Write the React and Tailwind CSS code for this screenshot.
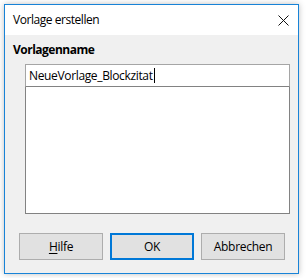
export default function App() {
  const font = { fontFamily: '"Segoe UI", "Open Sans", "Noto Sans", sans-serif' };

  return (
    <div className="w-[306px] h-[278px] bg-white pt-[4px] pl-[4px]" style={font}>
      <div className="w-[295px] h-[270px] border border-[#1883d7] flex flex-col shadow-[0_0_6px_rgba(0,0,0,0.25)]">
        {/* Title bar */}
        <div className="h-[30px] bg-white flex items-center justify-between pl-[8px] pr-[9px]">
          <span className="text-[12px] text-black leading-none tracking-[-0.45px]">Vorlage erstellen</span>
          <svg width="11" height="11" viewBox="0 0 11 11" className="mt-[1px]">
            <path d="M0.5 0.5 L10.5 10.5 M10.5 0.5 L0.5 10.5" stroke="#111" strokeWidth="1" />
          </svg>
        </div>

        {/* Body */}
        <div className="flex-1 bg-[#f0f0f0] flex flex-col">
          <div className="pl-[8px] pt-[9px] h-[29px] text-[12px] font-bold text-black leading-none tracking-[-0.5px]">
            Vorlagenname
          </div>

          <div className="ml-[20px] w-[265px] flex flex-col">
            <div className="h-[23px] bg-white border border-[#a5a5a5] border-b-[#828282] flex items-center pl-[3px]">
              <span className="text-[12px] text-black leading-none tracking-[-0.35px]">NeueVorlage_Blockzitat</span>
              <span className="w-px h-[15px] bg-black ml-[1px]"></span>
            </div>
            <div className="h-[127px] bg-white border border-t-0 border-[#828282]"></div>
          </div>

          <div className="mt-[19px] ml-[14px] flex gap-[7px]">
            <button className="w-[84px] h-[27px] bg-[#e1e1e1] border border-[#adadad] text-[12px] text-black flex items-center justify-center leading-none tracking-[-0.3px]">
              <span className="underline underline-offset-2">H</span>ilfe
            </button>
            <button className="w-[84px] h-[27px] bg-[#e1e1e1] border-2 border-[#0078d7] text-[12px] text-black flex items-center justify-center leading-none tracking-[-0.3px]">
              OK
            </button>
            <button className="w-[84px] h-[27px] bg-[#e1e1e1] border border-[#adadad] text-[12px] text-black flex items-center justify-center leading-none tracking-[-0.3px]">
              Abbrechen
            </button>
          </div>
        </div>
      </div>
    </div>
  );
}
